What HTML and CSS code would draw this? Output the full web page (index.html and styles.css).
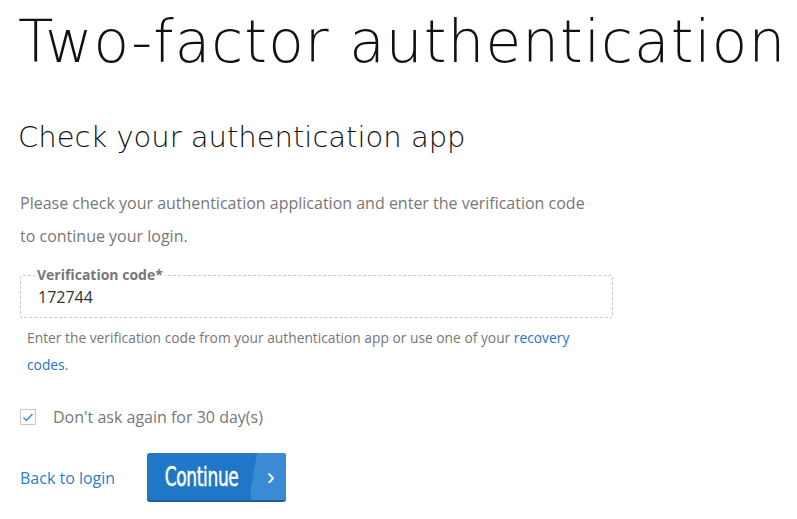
FILE: index.html
```html
<!DOCTYPE html>
<html lang="en">
<head>
    <meta charset="UTF-8">
    <meta name="viewport" content="width=device-width, initial-scale=1.0">
    <title>Two-factor authentication</title>
    <link rel="stylesheet" href="styles.css">
</head>
<body>
    <main class="page">
        <h1 class="title">Two-factor authentication</h1>
        <h2 class="subtitle">Check your authentication app</h2>

        <p class="intro">
            Please check your authentication application and enter the verification code
            to continue your login.
        </p>

        <form class="form">
            <fieldset class="field">
                <legend>Verification code*</legend>
                <input type="text" value="172744">
            </fieldset>
            <p class="hint">
                Enter the verification code from your authentication app or use one of your
                <a href="#">recovery codes</a>.
            </p>

            <label class="remember">
                <span class="box">
                    <svg width="12" height="10" viewBox="0 0 12 10">
                        <path d="M1.5 5.5 L4.5 8.5 L10.5 2" fill="none" stroke="#3a8ddb" stroke-width="1.5"/>
                    </svg>
                </span>
                Don't ask again for 30 day(s)
            </label>

            <div class="actions">
                <a href="#" class="back">Back to login</a>
                <button type="button" class="btn">
                    <span class="btn-text"><span class="btn-label">Continue</span></span>
                    <span class="btn-arrow">&rsaquo;</span>
                </button>
            </div>
        </form>
    </main>
</body>
</html>
```

FILE: styles.css
```css
* {
    box-sizing: border-box;
}

body {
    margin: 0;
    padding: 0;
    background-color: white;
    font-family: "Open Sans", "Noto Sans", sans-serif;
    color: #777;
}

.page {
    padding: 0 0 0 18px;
}

.title {
    margin: 6px 0 0 0;
    font-family: "DejaVu Sans", sans-serif;
    font-weight: 200;
    font-size: 58px;
    line-height: 72px;
    letter-spacing: 1.1px;
    color: #111;
    white-space: nowrap;
}

.subtitle {
    margin: 41px 0 0 0;
    font-family: "DejaVu Sans", sans-serif;
    font-weight: 200;
    font-size: 29px;
    line-height: 36px;
    color: #111;
}

.intro {
    margin: 32px 0 0 2px;
    width: 580px;
    font-size: 16px;
    line-height: 33px;
}

.form {
    margin-left: 2px;
}

.field {
    margin: 14px 0 0 0;
    width: 593px;
    padding: 2px 17px 7px 17px;
    border: 1px dashed #c8c8c8;
    border-radius: 3px;
}

.field legend {
    padding: 0 2px;
    margin-left: -3px;
    font-size: 14px;
    font-weight: bold;
    color: #777;
    line-height: 16px;
}

.field input {
    width: 100%;
    border: none;
    outline: none;
    padding: 0;
    font-family: "Open Sans", sans-serif;
    font-size: 16px;
    line-height: 25px;
    height: 25px;
    color: #333;
}

.hint {
    margin: 6px 0 0 7px;
    width: 560px;
    font-size: 13.8px;
    line-height: 27px;
}

.hint a {
    color: #1e74c6;
    text-decoration: none;
}

.remember {
    display: flex;
    align-items: center;
    gap: 17px;
    margin-top: 28px;
    font-size: 16px;
}

.box {
    width: 16px;
    height: 16px;
    border: 1px solid #c8c8c8;
    display: flex;
    align-items: center;
    justify-content: center;
}

.actions {
    display: flex;
    align-items: center;
    gap: 32px;
    margin-top: 25px;
}

.back {
    color: #2a7fd0;
    text-decoration: none;
    font-size: 16px;
}

.btn {
    display: flex;
    height: 49px;
    width: 139px;
    padding: 0;
    border: none;
    border-radius: 3px;
    overflow: hidden;
    background-color: #2077c7;
    border-bottom: 2px solid #1b5f9f;
    color: white;
    cursor: pointer;
}

.btn-text {
    display: flex;
    align-items: center;
    justify-content: center;
    width: 104px;
    padding-left: 4px;
}

.btn-label {
    display: inline-block;
    font-family: "DejaVu Sans Condensed", "DejaVu Sans", sans-serif;
    font-size: 27px;
    -webkit-text-stroke: 0.5px white;
    transform: scaleX(0.7);
    letter-spacing: -0.5px;
}

.btn-arrow {
    display: flex;
    align-items: center;
    justify-content: center;
    flex-grow: 1;
    font-size: 24px;
    padding-left: 4px;
    background: linear-gradient(100deg, transparent 0 14%, #3a8bd4 14%);
}
```
